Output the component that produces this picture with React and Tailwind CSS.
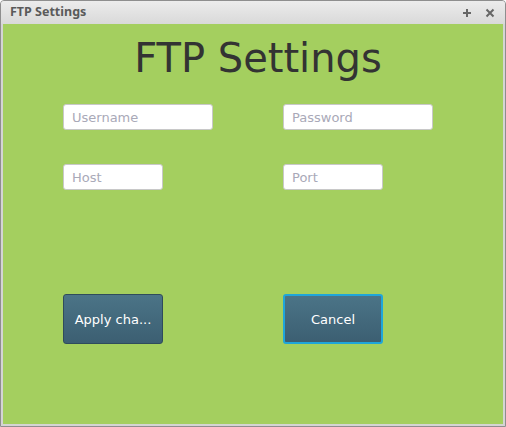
import React from 'react';

const font = { fontFamily: '"DejaVu Sans", sans-serif' };

function Field({ placeholder, width }) {
  return (
    <input
      type="text"
      placeholder={placeholder}
      className={`${width} h-[26px] px-[8px] text-[13px] text-[#333] bg-white border border-[#c8c8c8] rounded-[3px] outline-none placeholder:text-[#a9a9b8]`}
    />
  );
}

function Button({ children, focused }) {
  return (
    <button
      className={`w-[100px] h-[50px] pt-[2px] rounded-[3px] text-[13px] text-white bg-gradient-to-b from-[#4b7487] to-[#3c5f72] ${
        focused ? 'border-2 border-[#1fa6da]' : 'border border-[#2f4c5c]'
      }`}
    >
      {children}
    </button>
  );
}

export default function App() {
  return (
    <div
      className="w-[506px] h-[427px] flex flex-col border border-[#8e8e8e] rounded-t-[4px] bg-[#d4d4d4] overflow-hidden"
      style={font}
    >
      {/* title bar */}
      <div className="h-[23px] shrink-0 flex items-center justify-between pl-[9px] pr-[10px] bg-gradient-to-b from-[#ececec] to-[#d9d9d9]">
        <span
          className="text-[12.5px] font-bold text-[#5a5a5a]"
          style={{ fontFamily: '"Noto Sans", "DejaVu Sans", sans-serif' }}
        >
          FTP Settings
        </span>
        <div className="flex items-center gap-[13px]">
          <svg width="10" height="10" viewBox="0 0 10 10">
            <path d="M5 1v8M1 5h8" stroke="#666" strokeWidth="2" />
          </svg>
          <svg width="10" height="10" viewBox="0 0 10 10">
            <path d="M1.5 1.5l7 7M8.5 1.5l-7 7" stroke="#666" strokeWidth="2" />
          </svg>
        </div>
      </div>

      {/* content */}
      <div className="flex-1 mx-[2px] mb-[2px] bg-[#a4cf5f] flex flex-col">
        <h1 className="mt-[11px] h-[46px] pl-[10px] text-center text-[40px] leading-[46px] text-[#333]">
          FTP Settings
        </h1>

        <div className="mt-[23px] pl-[60px] grid grid-cols-[220px_1fr] gap-y-[34px]">
          <Field placeholder="Username" width="w-[150px]" />
          <Field placeholder="Password" width="w-[150px]" />
          <Field placeholder="Host" width="w-[100px]" />
          <Field placeholder="Port" width="w-[100px]" />
        </div>

        <div className="mt-[104px] pl-[60px] grid grid-cols-[220px_1fr]">
          <Button>Apply cha...</Button>
          <Button focused>Cancel</Button>
        </div>
      </div>
    </div>
  );
}
